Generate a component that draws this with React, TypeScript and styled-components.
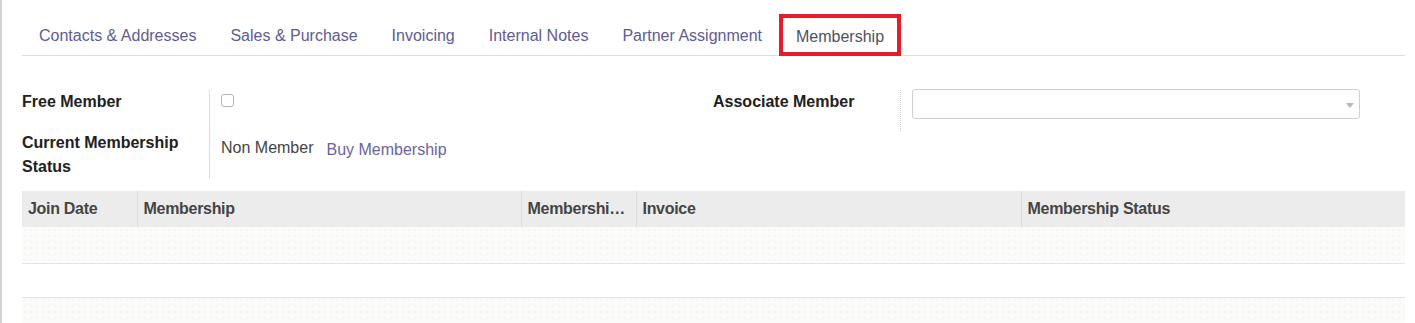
import React from 'react'
import styled, { createGlobalStyle } from 'styled-components'

const GlobalStyle = createGlobalStyle`
  html, body {
    margin: 0;
    padding: 0;
    background: #fff;
  }
  body {
    font-family: 'Liberation Sans', Arial, sans-serif;
    color: #444;
  }
`

const Sheet = styled.div`
  border-left: 2px solid #d4d4d4;
  padding: 0 10px 0 20px;
  height: 323px;
  overflow: hidden;
  box-sizing: border-box;
`

const Tabs = styled.nav`
  display: flex;
  padding-top: 14px;
  border-bottom: 1px solid #dedede;
`

const Tab = styled.div<{ $active?: boolean }>`
  display: flex;
  align-items: center;
  box-sizing: border-box;
  padding: 3px ${p => (p.$active ? 13 : 17)}px 0;
  font-size: 16px;
  color: ${p => (p.$active ? '#4f4f66' : '#5f5b94')};
  border: ${p => (p.$active ? '4px solid #e41e26' : 'none')};
  margin-bottom: ${p => (p.$active ? '-1px' : '0')};
  height: ${p => (p.$active ? 42 : 41)}px;
  background: #fff;
  &:first-child {
    padding-left: 17px;
  }
`

const Form = styled.section`
  display: grid;
  grid-template-columns: 691px 1fr;
  padding-top: 34px;
`

const Group = styled.div`
  display: grid;
  grid-template-columns: 187px 1fr;
  grid-auto-rows: min-content;
  align-content: start;
`

const Label = styled.div<{ $h: number }>`
  font-weight: bold;
  font-size: 16px;
  line-height: 24px;
  color: #212121;
  height: ${p => p.$h}px;
  padding-right: 14px;
`

const Value = styled.div<{ $h: number; $dotted?: boolean; $pt?: number }>`
  border-left: 1px ${p => (p.$dotted ? 'dotted #cfcfcf' : 'solid #dcdcdc')};
  height: ${p => p.$h}px;
  padding: ${p => p.$pt ?? 0}px 45px 0 11px;
  box-sizing: border-box;
  display: flex;
  align-items: flex-start;
  gap: 13px;
  font-size: 16px;
  line-height: 24px;
`

const Checkbox = styled.span`
  display: block;
  width: 13px;
  height: 13px;
  margin-top: 4px;
  border: 1px solid #b4b4b4;
  border-radius: 3px;
  box-sizing: border-box;
`

const Select = styled.div`
  flex: 1;
  height: 30px;
  margin-top: -1px;
  border: 1px solid #cfcfcf;
  border-radius: 3px;
  box-sizing: border-box;
  display: flex;
  justify-content: flex-end;
  align-items: center;
  padding-right: 5px;
  &::after {
    content: '';
    border-left: 4px solid transparent;
    border-right: 4px solid transparent;
    border-top: 5px solid #b8b8b8;
    margin-top: 2px;
  }
`

const Plain = styled.span`
  color: #444;
`

const LinkButton = styled.span`
  color: #6a64a0;
  margin-top: 2px;
`

const Table = styled.table`
  width: 100%;
  margin-top: 12px;
  border-collapse: collapse;
  table-layout: fixed;
  font-size: 16px;
`

const Th = styled.th<{ $w?: number }>`
  box-sizing: border-box;
  width: ${p => (p.$w ? `${p.$w}px` : 'auto')};
  height: 36px;
  padding: 0 6px;
  text-align: left;
  font-weight: bold;
  color: #454545;
  background: #ececec;
  border-left: 1px solid #dcdcdc;
  white-space: nowrap;
  overflow: hidden;
  text-overflow: ellipsis;
  letter-spacing: -0.3px;
  &:first-child {
    border-left: none;
  }
`

const Row = styled.tr<{ $striped?: boolean; $h: number }>`
  height: ${p => p.$h}px;
  border-bottom: 1px solid #e4e4e4;
  background-color: ${p => (p.$striped ? '#fbfbf9' : '#fff')};
  background-image: ${p =>
    p.$striped ? 'radial-gradient(circle, #ededea 0.6px, transparent 0.8px)' : 'none'};
  background-size: 6px 6px;
  td {
    padding: 0;
  }
`

const tabs = [
  'Contacts & Addresses',
  'Sales & Purchase',
  'Invoicing',
  'Internal Notes',
  'Partner Assignment',
  'Membership',
]

const columns: { title: string; w?: number }[] = [
  { title: 'Join Date', w: 115 },
  { title: 'Membership', w: 384 },
  { title: 'Membership Fee', w: 115 },
  { title: 'Invoice', w: 385 },
  { title: 'Membership Status' },
]

export default function App() {
  return (
    <>
      <GlobalStyle />
      <Sheet>
        <Tabs>
          {tabs.map(t => (
            <Tab key={t} $active={t === 'Membership'}>
              {t}
            </Tab>
          ))}
        </Tabs>

        <Form>
          <Group>
            <Label $h={41}>Free Member</Label>
            <Value $h={41}>
              <Checkbox />
            </Value>
            <Label $h={48}>Current Membership Status</Label>
            <Value $h={48} $pt={5}>
              <Plain>Non Member</Plain>
              <LinkButton>Buy Membership</LinkButton>
            </Value>
          </Group>
          <Group>
            <Label $h={41}>Associate Member</Label>
            <Value $h={41} $dotted>
              <Select />
            </Value>
          </Group>
        </Form>

        <Table>
          <thead>
            <tr>
              {columns.map(c => (
                <Th key={c.title} $w={c.w}>
                  {c.title}
                </Th>
              ))}
            </tr>
          </thead>
          <tbody>
            <Row $striped $h={36}>
              <td colSpan={5} />
            </Row>
            <Row $h={34}>
              <td colSpan={5} />
            </Row>
            <Row $striped $h={34}>
              <td colSpan={5} />
            </Row>
          </tbody>
        </Table>
      </Sheet>
    </>
  )
}
